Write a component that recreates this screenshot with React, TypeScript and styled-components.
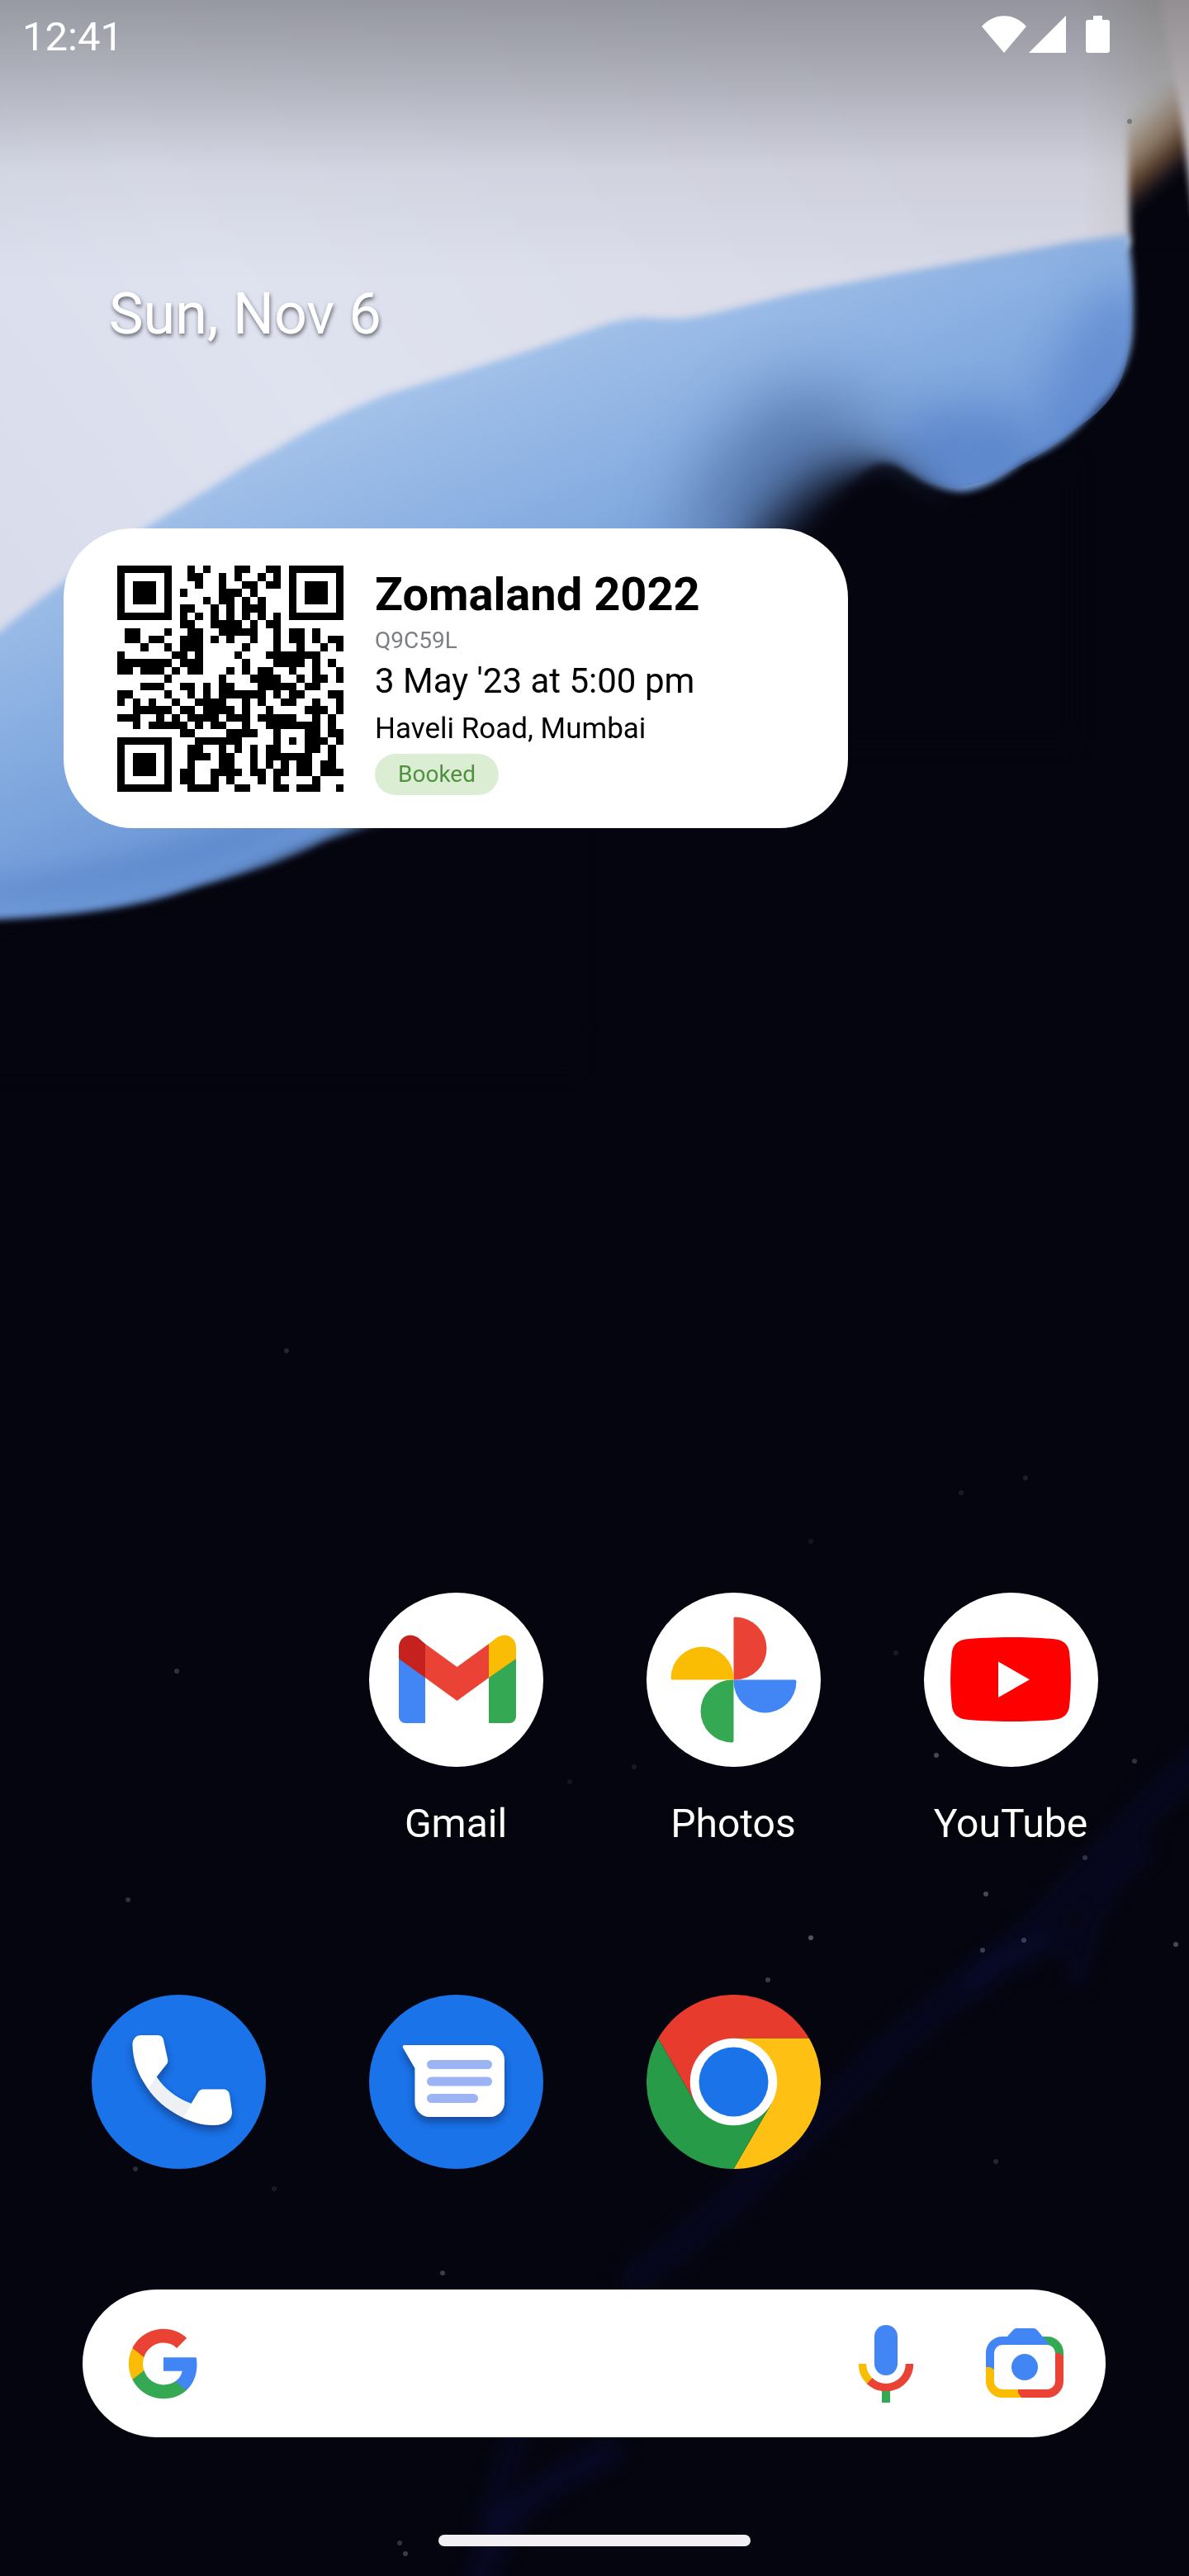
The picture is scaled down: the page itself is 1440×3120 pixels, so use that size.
import React from "react";
import styled, { createGlobalStyle } from "styled-components";

const GlobalStyle = createGlobalStyle`
  * { box-sizing: border-box; }
  body { margin: 0; background: #05050f; }
`;

const Screen = styled.div`
  position: relative;
  display: flex;
  flex-direction: column;
  min-height: 100vh;
  overflow: hidden;
  background: #05050f;
  color: #fff;
  font-family: Roboto, "Noto Sans", sans-serif;
`;

const WallpaperArt = styled.svg`
  position: absolute;
  inset: 0;
  width: 100%;
  height: 100%;

  filter {
    color-interpolation-filters: sRGB;
  }
`;

const StatusBar = styled.header`
  position: relative;
  display: flex;
  justify-content: space-between;
  align-items: flex-start;
  padding: 19px 96px 0 27px;
`;

const Clock = styled.time`
  font-size: 49px;
  line-height: 52px;
`;

const StatusIcons = styled.div`
  display: flex;
  align-items: center;
`;

const StatusGlyph = styled.svg<{ $gap: number }>`
  display: block;
  height: 45px;
  margin-left: ${(p) => p.$gap}px;
  fill: #fff;
`;

const Home = styled.main`
  position: relative;
  display: flex;
  flex: 1;
  flex-direction: column;
`;

const Today = styled.h1`
  margin: 268px 0 0;
  padding-left: 132px;
  font-size: 70px;
  font-weight: 400;
  line-height: 82px;
  text-shadow: 1px 3px 5px rgba(0, 0, 0, 0.55);
`;

const TicketCard = styled.article`
  display: flex;
  align-items: flex-start;
  align-self: flex-start;
  gap: 38px;
  width: 66%;
  margin: 219px 0 0 77px;
  padding: 45px 64px 40px 65px;
  border-radius: 84px;
  background: #fff;
  color: #000;
`;

const QrImage = styled.svg`
  flex: none;
  display: block;
  width: 274px;
  height: 274px;
`;

const TicketInfo = styled.div`
  display: flex;
  flex-direction: column;
  align-items: flex-start;
`;

const TicketTitle = styled.h2`
  margin: 0;
  font-size: 56px;
  font-weight: 700;
  line-height: 70px;
`;

const TicketLine = styled.p<{ $size: number; $line: number; $muted?: boolean }>`
  margin: 0;
  font-size: ${(p) => p.$size}px;
  line-height: ${(p) => p.$line}px;
  color: ${(p) => (p.$muted ? "#7b7f85" : "#000")};
`;

const Badge = styled.span`
  padding: 0 28px;
  border-radius: 25px;
  background: #dbeed3;
  color: #4f9140;
  font-size: 28px;
  line-height: 50px;
`;

const BottomArea = styled.div`
  margin-top: auto;
  padding-bottom: 36px;
`;

const AppRow = styled.nav<{ $top: number }>`
  display: grid;
  grid-template-columns: repeat(4, 1fr);
  margin-top: ${(p) => p.$top}px;
  padding: 0 48px;
`;

const AppLink = styled.a<{ $column?: number }>`
  grid-column: ${(p) => p.$column ?? "auto"};
  display: flex;
  flex-direction: column;
  align-items: center;
  gap: 41px;
  color: #fff;
  text-decoration: none;
`;

const AppIcon = styled.svg`
  display: block;
  width: 211px;
  height: 211px;
`;

const AppLabel = styled.span`
  font-size: 48px;
  line-height: 56px;
  text-shadow: 0 2px 6px rgba(0, 0, 0, 0.8);
`;

const SearchBar = styled.form`
  display: flex;
  align-items: center;
  height: 179px;
  margin: 146px 101px 0 100px;
  padding: 0 50px 0 52px;
  border-radius: 90px;
  background: #fff;
`;

const SearchField = styled.input`
  flex: 1;
  min-width: 0;
  height: 100px;
  margin: 0 36px;
  border: 0;
  outline: 0;
  background: transparent;
  color: #202124;
  font: 400 48px Roboto, sans-serif;
`;

const SearchActions = styled.div`
  display: flex;
  gap: 72px;
`;

const IconButton = styled.button`
  display: block;
  padding: 0;
  border: 0;
  background: none;
  cursor: pointer;

  svg {
    display: block;
  }
`;

const GoogleMark = styled.svg`
  flex: none;
  width: 92px;
  height: 92px;
`;

const HomeHandle = styled.div`
  width: 378px;
  height: 14px;
  margin: 118px auto 0;
  border-radius: 7px;
  background: #f1eff4;
`;

const QR_ROWS = [
  [9, 11, 15, 16, 19, 20],
  [9, 10, 13, 15, 18, 20],
  [10, 13, 16, 17, 19, 20],
  [8, 13, 14, 15, 17],
  [11, 13, 14, 16, 18],
  [8, 9, 12, 14, 16, 17, 18],
  [8, 10, 12, 14, 16, 18, 20],
  [8, 9, 12, 13, 14, 15, 17, 19, 20],
  [1, 2, 6, 9, 10, 13, 14, 15, 16, 17, 20, 22, 23, 25],
  [1, 2, 4, 5, 8, 9, 10, 12, 14, 17, 20, 22, 23, 25, 27, 28],
  [3, 6, 8, 9, 10, 16, 20, 23, 26, 28],
  [0, 7, 8, 10, 15, 19, 20, 21, 22, 23, 24, 25],
  [0, 1, 2, 3, 4, 5, 6, 8, 9, 10, 16, 20, 21, 22, 23, 25, 27],
  [0, 1, 3, 4, 5, 7, 9, 10, 14, 16, 18, 19, 22, 25, 28],
  [6, 13, 17, 18, 19, 20, 23, 25, 26, 28],
  [3, 4, 5, 8, 9, 11, 13, 14, 18, 19, 20, 21, 22, 24, 25],
  [0, 1, 6, 9, 11, 13, 14, 15, 16, 17, 18, 20, 22, 23, 27, 28],
  [0, 2, 4, 7, 10, 11, 12, 13, 16, 18, 21, 22, 25, 28],
  [2, 3, 4, 5, 6, 8, 9, 11, 12, 13, 14, 16, 19, 24, 25, 26, 28],
  [0, 1, 2, 5, 7, 9, 10, 11, 12, 14, 15, 16, 18, 19, 20, 21, 22, 25, 27],
  [2, 4, 5, 6, 7, 8, 10, 12, 13, 16, 19, 20, 21, 22, 23, 24, 25, 27],
  [8, 9, 14, 15, 16, 17, 20, 24, 25, 27, 28],
  [10, 11, 12, 13, 14, 15, 20, 22, 24, 25, 26, 28],
  [9, 10, 13, 15, 17, 19, 20, 24, 25, 27],
  [9, 10, 11, 13, 14, 17, 19, 20, 21, 22, 23, 24, 27],
  [9, 13, 14, 17, 19, 21, 23, 24, 26, 27],
  [8, 9, 12, 13, 14, 15, 17, 18, 20, 21, 23, 24, 26, 27, 28],
  [8, 9, 12, 14, 18, 20, 25],
  [9, 10, 11, 12, 15, 16, 20, 21, 23, 24, 25, 28],
];

const QR_FINDERS = [
  [0, 0],
  [22, 0],
  [0, 22],
];

function QrCode() {
  return (
    <QrImage viewBox="0 0 29 29" shapeRendering="crispEdges" role="img" aria-label="Ticket QR code">
      {QR_FINDERS.map(([x, y]) => (
        <path
          key={`${x}-${y}`}
          fillRule="evenodd"
          d={`M${x} ${y}h7v7h-7z M${x + 1} ${y + 1}h5v5h-5z M${x + 2} ${y + 2}h3v3h-3z`}
        />
      ))}
      <path d={QR_ROWS.map((cols, y) => cols.map((x) => `M${x} ${y}h1v1h-1z`).join("")).join("")} />
    </QrImage>
  );
}

const STARS: [number, number, number][] = [
  [347, 1636, 0.3], [1242, 1790, 0.25], [1164, 1808, 0.2], [982, 1867, 0.15],
  [214, 2024, 0.4], [1085, 2002, 0.2], [1134, 2126, 0.6], [1374, 2133, 0.4],
  [1314, 2250, 0.4], [1194, 2294, 0.6], [155, 2301, 0.4], [982, 2347, 0.7],
  [1240, 2350, 0.5], [1190, 2362, 0.5], [1424, 2355, 0.6], [930, 2398, 0.5],
  [1206, 2618, 0.3], [164, 2627, 0.35], [332, 2651, 0.2], [536, 2753, 0.5],
  [484, 3080, 0.4], [491, 3093, 0.5], [690, 2158, 0.15], [768, 2140, 0.2],
];

function Wallpaper() {
  return (
    <WallpaperArt viewBox="0 0 1440 3120" preserveAspectRatio="xMidYMin slice" aria-hidden="true">
      <defs>
        <filter id="soft4" x="-10%" y="-10%" width="120%" height="120%"><feGaussianBlur stdDeviation="4" /></filter>
        <filter id="soft9" x="-10%" y="-10%" width="120%" height="120%"><feGaussianBlur stdDeviation="9" /></filter>
        <filter id="soft12" x="-30%" y="-30%" width="160%" height="160%"><feGaussianBlur stdDeviation="12" /></filter>
        <filter id="soft16" x="-30%" y="-30%" width="160%" height="160%"><feGaussianBlur stdDeviation="16" /></filter>
        <filter id="soft26" x="-40%" y="-40%" width="180%" height="180%"><feGaussianBlur stdDeviation="26" /></filter>
        <filter id="soft45" x="-80%" y="-80%" width="260%" height="260%"><feGaussianBlur stdDeviation="45" /></filter>
        <linearGradient id="sky" x1="0" y1="700" x2="1000" y2="0" gradientUnits="userSpaceOnUse">
          <stop offset="0" stopColor="#d9dceb" />
          <stop offset="0.35" stopColor="#dfe2ef" />
          <stop offset="1" stopColor="#d9dae7" />
        </linearGradient>
        <linearGradient id="wave" x1="420" y1="480" x2="640" y2="1000" gradientUnits="userSpaceOnUse">
          <stop offset="0" stopColor="#a5c3ea" />
          <stop offset="0.45" stopColor="#84abe0" />
          <stop offset="1" stopColor="#5c8ad0" />
        </linearGradient>
        <linearGradient id="shade" x1="0" y1="0" x2="0" y2="340" gradientUnits="userSpaceOnUse">
          <stop offset="0" stopColor="#000" stopOpacity="0.32" />
          <stop offset="0.25" stopColor="#000" stopOpacity="0.22" />
          <stop offset="0.6" stopColor="#000" stopOpacity="0.05" />
          <stop offset="1" stopColor="#000" stopOpacity="0" />
        </linearGradient>
        <linearGradient id="ember" x1="1362" y1="128" x2="1434" y2="212" gradientUnits="userSpaceOnUse">
          <stop offset="0" stopColor="#c8c7ca" stopOpacity="0" />
          <stop offset="0.25" stopColor="#bdb6ae" />
          <stop offset="0.5" stopColor="#9a8570" />
          <stop offset="0.72" stopColor="#59402f" />
          <stop offset="0.9" stopColor="#17111a" />
          <stop offset="1" stopColor="#05050f" />
        </linearGradient>
        <linearGradient id="margin" x1="1310" y1="0" x2="1400" y2="0" gradientUnits="userSpaceOnUse">
          <stop offset="0" stopColor="#c8c8c9" stopOpacity="0" />
          <stop offset="1" stopColor="#c8c8c9" stopOpacity="0.85" />
        </linearGradient>
        <clipPath id="waveClip">
          <path d="M600 300 H1364 C1372 340 1372 388 1366 420 C1364 470 1335 500 1300 520 C1265 550 1210 583 1162 590 C1130 590 1110 575 1080 560 L600 560 Z" />
        </clipPath>
      </defs>

      <path fill="url(#sky)" filter="url(#soft4)" d="M-60 -60 H1500 V240 L1366 300 L1000 700 L-60 900 Z" />
      <rect x="1310" y="0" width="130" height="290" fill="url(#margin)" />
      <path fill="url(#ember)" filter="url(#soft4)" d="M1364 100 H1500 V420 H1372 Z" />
      <path fill="#d9d2d6" filter="url(#soft4)" d="M1402 -20 H1480 V270 L1446 260 L1430 140 Z" />

      <path fill="#05050f" filter="url(#soft4)" d="M1371 310 H1500 V1240 H600 V700 L1000 500 Z" />
      <path
        fill="url(#wave)"
        filter="url(#soft4)"
        d="M-60 820 L0 765 C90 690 160 650 240 600 C275 580 300 560 330 547 C380 515 420 498 468 478 L551 453 L643 424 L707 402 C740 390 765 383 790 385 C815 388 840 385 863 380 L964 355 L1056 337 L1194 312 L1304 292 L1366 284 C1372 320 1373 350 1372 388 C1373 440 1352 470 1330 490 C1305 525 1275 545 1240 559 C1210 583 1185 596 1162 596 C1135 594 1115 583 1090 566 C1060 550 1035 575 1000 640 L500 1003 C450 1000 420 1015 395 1020 C340 1050 290 1060 230 1078 C160 1102 80 1112 -60 1116 Z"
      />
      <g clipPath="url(#waveClip)">
        <ellipse cx="1330" cy="470" rx="60" ry="130" fill="#5580cc" opacity="0.55" filter="url(#soft26)" transform="rotate(18 1330 470)" />
        <ellipse cx="1170" cy="550" rx="90" ry="60" fill="#4f7ac4" opacity="0.6" filter="url(#soft26)" />
      </g>
      <path fill="#4a6a9e" opacity="0.8" filter="url(#soft45)" d="M820 700 L860 560 L950 470 L1060 500 L1080 660 Z" />
      <path fill="#0a0e1c" opacity="0.95" filter="url(#soft26)" d="M880 780 L915 650 C955 604 990 570 1035 562 C1070 560 1095 584 1130 618 L1200 780 Z" />
      <path fill="#05050f" filter="url(#soft12)" d="M960 660 C1000 610 1030 580 1060 566 C1085 566 1115 604 1160 616 C1220 608 1260 580 1300 554 L1300 900 H960 Z" />
      <path fill="#05050f" filter="url(#soft9)" d="M470 985 C420 1010 350 1040 300 1060 C200 1100 120 1124 -60 1132 V1300 H700 V985 Z" />
      <path fill="#3c66b5" opacity="0.35" filter="url(#soft16)" d="M-60 1070 C100 1070 250 1010 370 975 L370 990 C260 1050 120 1085 -60 1092 Z" />
      <rect width="1440" height="340" fill="url(#shade)" />

      <g filter="url(#soft12)" fill="none" stroke="#0c1048" strokeLinecap="round">
        <path d="M1480 2110 C1370 2190 1310 2300 1180 2400 C1080 2470 1000 2560 860 2690 L770 2760" strokeWidth="40" opacity="0.26" />
        <path d="M1390 2240 C1330 2280 1312 2350 1304 2400" strokeWidth="16" opacity="0.4" />
        <path d="M1290 2350 C1230 2370 1200 2370 1175 2400" strokeWidth="24" opacity="0.3" />
        <path d="M740 2970 C660 3010 600 3030 575 3150" strokeWidth="30" opacity="0.4" />
        <path d="M625 2950 L590 3060" strokeWidth="20" opacity="0.4" />
      </g>
      {STARS.map(([x, y, opacity]) => (
        <circle key={`${x}-${y}`} cx={x} cy={y} r="3" fill="#70758a" opacity={opacity} />
      ))}
      <circle cx="1368" cy="147" r="3" fill="#77777c" />
    </WallpaperArt>
  );
}

function GmailIcon() {
  return (
    <AppIcon viewBox="0 0 211 211" aria-hidden="true">
      <circle cx="105.5" cy="105.5" r="105.5" fill="#fff" />
      <path fill="#4285f4" d="M36 79 68 102V158H44a8 8 0 0 1-8-8Z" />
      <path fill="#34a853" d="M178 79 145 102V158h25a8 8 0 0 0 8-8Z" />
      <path fill="#ea4335" d="M68 62 106.5 90 145 62V103L106.5 131 68 103Z" />
      <path fill="#c5221f" d="M36 80V66C36 53 50 47 60 55L68 62V103Z" />
      <path fill="#fbbc04" d="M178 80V66C178 53 164 47 154 55L145 62V103Z" />
    </AppIcon>
  );
}

const PETALS = ["#ea4335", "#4285f4", "#34a853", "#fbbc04"];

function PhotosIcon() {
  return (
    <AppIcon viewBox="0 0 211 211" aria-hidden="true">
      <circle cx="105.5" cy="105.5" r="105.5" fill="#fff" />
      {PETALS.map((fill, i) => (
        <path key={fill} fill={fill} transform={`rotate(${i * 90} 105.5 105.5)`} d="M105.5 31.5q0-2 2-2a38 38 0 0 1 0 76h-2z" />
      ))}
    </AppIcon>
  );
}

function YouTubeIcon() {
  return (
    <AppIcon viewBox="0 0 211 211" aria-hidden="true">
      <circle cx="105.5" cy="105.5" r="105.5" fill="#fff" />
      <path
        fill="#f00"
        d="M105 54C125 54 148 55 160 56.500C170 58 175 64 176 72C178.500 94 178.500 116 176 138C175 146 170 152 160 153.500C148 155 125 156 105 156S62 155 50 153.500C40 152 35 146 34 138C31.500 116 31.500 94 34 72C35 64 40 58 50 56.500C62 55 85 54 105 54Z"
      />
      <path fill="#fff" d="M90 83.500V127L128 105.300Z" />
    </AppIcon>
  );
}

function PhoneIcon() {
  return (
    <AppIcon viewBox="0 0 211 211" aria-hidden="true">
      <defs>
        <filter id="phoneShadow" x="-20%" y="-20%" width="140%" height="150%">
          <feDropShadow dx="0" dy="6" stdDeviation="5" floodColor="#0b2f6b" floodOpacity="0.6" />
        </filter>
      </defs>
      <circle cx="105.5" cy="105.5" r="105.5" fill="#1a73e8" />
      <path
        fill="#fff"
        filter="url(#phoneShadow)"
        d="M59 49H80Q86 49 87 55L92 78Q93 82 90 85L78.500 99.500C88 114 102 125 120.500 132L129 118Q131 114.500 135 114.500H160Q166 115 167 121L170 142C170 153 160 158 147 158C133 158 121 154 109 148C90 138 77 127 67 112C57 97 50 82 49.500 60Q50 50 59 49Z"
      />
      <path fill="#eef0f3" d="M69 113 78.500 99.500C88 114 102 125 121 132L111 148.500C93 140 80 129 69 113Z" />
    </AppIcon>
  );
}

function MessagesIcon() {
  return (
    <AppIcon viewBox="0 0 211 211" aria-hidden="true">
      <defs>
        <filter id="messageShadow" x="-20%" y="-20%" width="140%" height="150%">
          <feDropShadow dx="0" dy="6" stdDeviation="5" floodColor="#0b2f6b" floodOpacity="0.6" />
        </filter>
      </defs>
      <circle cx="105.5" cy="105.5" r="105.5" fill="#1a73e8" />
      <path
        fill="#fff"
        filter="url(#messageShadow)"
        d="M43 61H146a18 18 0 0 1 18 18V130a18 18 0 0 1-18 18H73.500a18 18 0 0 1-18-18V89L41 64Q40 61 43 61Z"
      />
      <g fill="#9cb3f4">
        <rect x="70" y="79" width="79" height="11" rx="5.5" />
        <rect x="70" y="99.5" width="79" height="11" rx="5.5" />
        <rect x="70" y="120" width="62" height="11" rx="5.5" />
      </g>
    </AppIcon>
  );
}

function ChromeIcon() {
  return (
    <AppIcon viewBox="0 0 211 211" aria-hidden="true">
      <path fill="#e73b2e" d="M14.100 52.750A105.500 105.500 0 0 1 196.900 52.750H105.500L105.500 105.500 59.800 131.900Z" />
      <path fill="#fec012" d="M196.900 52.750A105.500 105.500 0 0 1 105.500 211L151.200 131.900 105.500 105.500V52.750Z" />
      <path fill="#279b48" d="M105.500 211A105.500 105.500 0 0 1 14.100 52.750L59.800 131.900 105.500 105.500 151.200 131.900Z" />
      <circle cx="105.5" cy="105.5" r="52.75" fill="#fff" />
      <circle cx="105.5" cy="105.5" r="42" fill="#1a73e8" />
    </AppIcon>
  );
}

function GoogleLogo() {
  return (
    <GoogleMark viewBox="0 0 24 24" aria-hidden="true">
      <path fill="#4285f4" d="M22.560 12.250c0-.780-.070-1.530-.200-2.250H12v4.260h5.920c-.260 1.370-1.040 2.530-2.210 3.310v2.770h3.570c2.080-1.920 3.280-4.740 3.280-8.090z" />
      <path fill="#34a853" d="M12 23c2.970 0 5.460-.980 7.280-2.660l-3.570-2.770c-.980.660-2.230 1.060-3.710 1.060-2.860 0-5.290-1.930-6.160-4.530H2.180v2.840C3.990 20.530 7.700 23 12 23z" />
      <path fill="#fbbc05" d="M5.840 14.090c-.220-.660-.350-1.360-.350-2.090s.130-1.430.350-2.090V7.070H2.180C1.430 8.550 1 10.220 1 12s.430 3.450 1.180 4.930l2.850-2.220.810-.620z" />
      <path fill="#ea4335" d="M12 5.380c1.620 0 3.060.560 4.210 1.640l3.150-3.150C17.450 2.090 14.970 1 12 1 7.700 1 3.990 3.470 2.180 7.070l3.660 2.840c.870-2.600 3.300-4.530 6.160-4.530z" />
    </GoogleMark>
  );
}

function MicIcon() {
  return (
    <svg width="96" height="96" viewBox="0 0 96 96" aria-hidden="true">
      <rect x="34" y="1" width="28" height="61" rx="14" fill="#4285f4" />
      <path fill="none" stroke="#ea4335" strokeWidth="9.5" d="M28 68.500A28.500 28.500 0 0 0 76.500 48" />
      <path fill="none" stroke="#fbbc04" strokeWidth="9.5" d="M19.500 48A28.500 28.500 0 0 0 28 68.500" />
      <path fill="#34a853" d="M43 81H53V95H43Z" />
    </svg>
  );
}

function LensIcon() {
  return (
    <svg width="96" height="96" viewBox="0 0 96 96" aria-hidden="true">
      <g fill="none" strokeWidth="10">
        <path stroke="#34a853" d="M70 20H75A15 15 0 0 1 90 35V38" />
        <path stroke="#ea4335" d="M90 35V69A15 15 0 0 1 75 84H40" />
        <path stroke="#fbbc04" d="M40 84H21A15 15 0 0 1 6 69V52" />
        <path stroke="#4285f4" d="M6 52V35A15 15 0 0 1 21 20H72" />
      </g>
      <path fill="#34a853" d="M85 31 95 39V34H85Z" />
      <path fill="#4285f4" d="M26 16 34 7Q36 5 38 5H59Q61 5 63 7L78 25H26Z" />
      <path fill="#4285f4" d="M1 49 11 55V48H1Z" />
      <path fill="#fbbc04" d="M36 79H37L44 89H36Z" />
      <circle cx="48" cy="52" r="16" fill="#4285f4" />
    </svg>
  );
}

export default function App() {
  return (
    <>
      <GlobalStyle />
      <Screen>
        <Wallpaper />
        <StatusBar>
          <Clock>12:41</Clock>
          <StatusIcons>
            <StatusGlyph $gap={0} width="54" viewBox="0 0 54 45" aria-label="Wi-Fi">
              <path d="M0 13C15-4 39-4 54 13L27 45Z" />
            </StatusGlyph>
            <StatusGlyph $gap={3} width="45" viewBox="0 0 45 45" aria-label="Signal">
              <path d="M45 0V45H0Z" />
            </StatusGlyph>
            <StatusGlyph $gap={24} width="29" viewBox="0 0 29 45" aria-label="Battery">
              <path d="M9 0H20V5H26Q29 5 29 8V42Q29 45 26 45H3Q0 45 0 42V8Q0 5 3 5H9Z" />
            </StatusGlyph>
          </StatusIcons>
        </StatusBar>
        <Home>
          <Today>Sun, Nov 6</Today>
          <TicketCard>
            <QrCode />
            <TicketInfo>
              <TicketTitle>Zomaland 2022</TicketTitle>
              <TicketLine $size={28} $line={42} $muted>Q9C59L</TicketLine>
              <TicketLine $size={42} $line={56}>3 May '23 at 5:00 pm</TicketLine>
              <TicketLine $size={35} $line={60}>Haveli Road, Mumbai</TicketLine>
              <Badge>Booked</Badge>
            </TicketInfo>
          </TicketCard>
          <BottomArea>
            <AppRow $top={0} aria-label="Apps">
              <AppLink href="#gmail" $column={2}>
                <GmailIcon />
                <AppLabel>Gmail</AppLabel>
              </AppLink>
              <AppLink href="#photos">
                <PhotosIcon />
                <AppLabel>Photos</AppLabel>
              </AppLink>
              <AppLink href="#youtube">
                <YouTubeIcon />
                <AppLabel>YouTube</AppLabel>
              </AppLink>
            </AppRow>
            <AppRow $top={179} aria-label="Dock">
              <AppLink href="#phone" aria-label="Phone"><PhoneIcon /></AppLink>
              <AppLink href="#messages" aria-label="Messages"><MessagesIcon /></AppLink>
              <AppLink href="#chrome" aria-label="Chrome"><ChromeIcon /></AppLink>
            </AppRow>
            <SearchBar role="search">
              <GoogleLogo />
              <SearchField type="text" aria-label="Search" />
              <SearchActions>
                <IconButton type="button" aria-label="Voice search"><MicIcon /></IconButton>
                <IconButton type="button" aria-label="Lens"><LensIcon /></IconButton>
              </SearchActions>
            </SearchBar>
            <HomeHandle />
          </BottomArea>
        </Home>
      </Screen>
    </>
  );
}
